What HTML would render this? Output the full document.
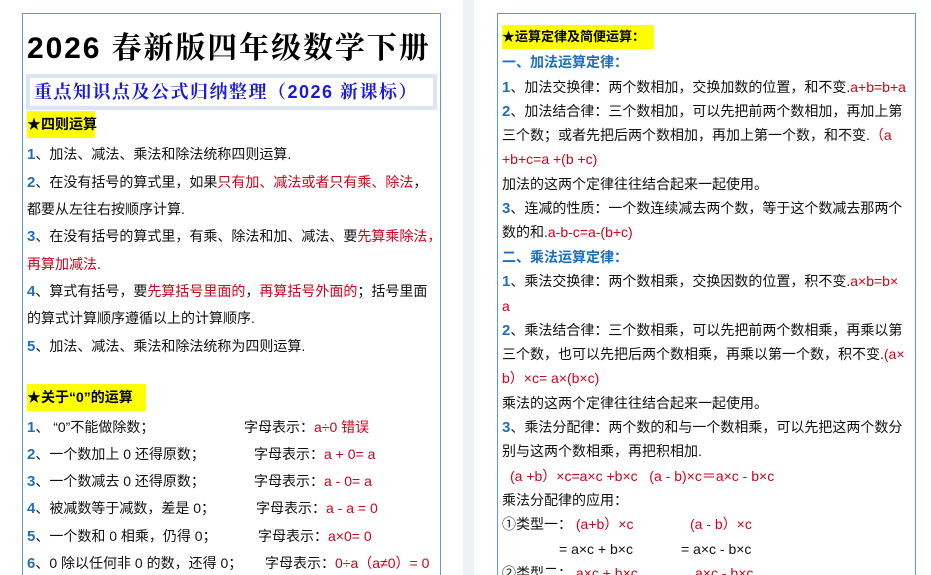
<!DOCTYPE html>
<html><head><meta charset="utf-8"><style>
*{margin:0;padding:0;box-sizing:border-box}
html,body{width:931px;height:575px;overflow:hidden}
body{background:#fff;position:relative;font-family:"Liberation Sans","Noto Sans CJK SC",sans-serif;color:#111}
.box{position:absolute;top:13px;border:1px solid #5b9bd5;border-bottom:none;height:562px}
.l{position:absolute;white-space:nowrap;font-size:14px;line-height:20px}
.n{color:#1f6fbf;font-weight:bold;font-size:15px}
.r{color:#d0021b}
.hl{background:#ffff00;font-weight:bold;color:#000}
.b{color:#1f6fbf;font-weight:bold}
</style></head><body>
<div style="position:absolute;left:463px;top:0;width:11px;height:575px;background:#eef0f4"></div>
<div class="box" style="left:22px;width:419px"></div>
<div class="box" style="left:497px;width:419px"></div>

<div class="l" style="left:27px;top:30px;font-size:30px;line-height:38px;font-weight:bold;letter-spacing:1.9px;color:#000;font-family:'Liberation Sans','Noto Serif CJK SC',serif">2026 春新版四年级数学下册</div>
<div style="position:absolute;left:26px;top:74px;width:411px;height:36px;background:#dde5f4;padding:4px"><div style="background:#fff;height:28px;color:#1a1adb;font-weight:bold;font-size:18px;line-height:28px;padding-left:4px;white-space:nowrap;letter-spacing:1.5px;font-family:'Liberation Sans','Noto Serif CJK SC',serif">重点知识点及公式归纳整理（2026 新课标）</div></div>
<div class="l hl" style="left:27px;top:111px;height:27px;line-height:27px;width:68px">★四则运算</div>
<div class="l" style="left:27px;top:144px"><span class="n">1</span>、加法、减法、乘法和除法统称四则运算.</div>
<div class="l" style="left:27px;top:172px"><span class="n">2</span>、在没有括号的算式里，如果<span class="r">只有加、减法或者只有乘、除法</span>，</div>
<div class="l" style="left:27px;top:199px">都要从左往右按顺序计算.</div>
<div class="l" style="left:27px;top:226px"><span class="n">3</span>、在没有括号的算式里，有乘、除法和加、减法、要<span class="r">先算乘除法，</span></div>
<div class="l" style="left:27px;top:254px"><span class="r">再算加减法</span>.</div>
<div class="l" style="left:27px;top:281px"><span class="n">4</span>、算式有括号，要<span class="r">先算括号里面的</span>，<span class="r">再算括号外面的</span>；括号里面</div>
<div class="l" style="left:27px;top:308px">的算式计算顺序遵循以上的计算顺序.</div>
<div class="l" style="left:27px;top:336px"><span class="n">5</span>、加法、减法、乘法和除法统称为四则运算.</div>
<div class="l hl" style="left:27px;top:384px;height:27px;line-height:27px;width:119px">★关于“0”的运算</div>
<div class="l" style="left:27px;top:417px"><span class="n">1</span>、 “0”不能做除数；</div><div class="l" style="left:244px;top:417px">字母表示：<span class="r">a÷0 错误</span></div>
<div class="l" style="left:27px;top:444px"><span class="n">2</span>、一个数加上 0 还得原数；</div><div class="l" style="left:254px;top:444px">字母表示：<span class="r">a + 0= a</span></div>
<div class="l" style="left:27px;top:471px"><span class="n">3</span>、一个数减去 0 还得原数；</div><div class="l" style="left:254px;top:471px">字母表示：<span class="r">a - 0= a</span></div>
<div class="l" style="left:27px;top:498px"><span class="n">4</span>、被减数等于减数，差是 0；</div><div class="l" style="left:256px;top:498px">字母表示：<span class="r">a - a = 0</span></div>
<div class="l" style="left:27px;top:526px"><span class="n">5</span>、一个数和 0 相乘，仍得 0；</div><div class="l" style="left:258px;top:526px">字母表示：<span class="r">a×0= 0</span></div>
<div class="l" style="left:27px;top:553px"><span class="n">6</span>、0 除以任何非 0 的数，还得 0；</div><div class="l" style="left:265px;top:553px">字母表示：<span class="r">0÷a（a≠0）= 0</span></div>

<div class="l hl" style="left:502px;top:25px;height:24px;line-height:24px;width:152px;font-size:13px">★运算定律及简便运算：</div>
<div class="l b" style="left:502px;top:52px">一、加法运算定律：</div>
<div class="l" style="left:502px;top:77px"><span class="n">1</span>、加法交换律：两个数相加，交换加数的位置，和不变.<span class="r">a+b=b+a</span></div>
<div class="l" style="left:502px;top:101px"><span class="n">2</span>、加法结合律：三个数相加，可以先把前两个数相加，再加上第</div>
<div class="l" style="left:502px;top:125px">三个数；或者先把后两个数相加，再加上第一个数，和不变.<span class="r">（a</span></div>
<div class="l" style="left:502px;top:149px"><span class="r">+b+c=a +(b +c)</span></div>
<div class="l" style="left:502px;top:174px">加法的这两个定律往往结合起来一起使用。</div>
<div class="l" style="left:502px;top:198px"><span class="n">3</span>、连减的性质：一个数连续减去两个数，等于这个数减去那两个</div>
<div class="l" style="left:502px;top:222px">数的和.<span class="r">a-b-c=a-(b+c)</span></div>
<div class="l b" style="left:502px;top:247px">二、乘法运算定律：</div>
<div class="l" style="left:502px;top:271px"><span class="n">1</span>、乘法交换律：两个数相乘，交换因数的位置，积不变.<span class="r">a×b=b×</span></div>
<div class="l" style="left:502px;top:296px"><span class="r">a</span></div>
<div class="l" style="left:502px;top:320px"><span class="n">2</span>、乘法结合律：三个数相乘，可以先把前两个数相乘，再乘以第</div>
<div class="l" style="left:502px;top:344px">三个数，也可以先把后两个数相乘，再乘以第一个数，积不变.<span class="r">(a×</span></div>
<div class="l" style="left:502px;top:368px"><span class="r">b）×c= a×(b×c)</span></div>
<div class="l" style="left:502px;top:393px">乘法的这两个定律往往结合起来一起使用。</div>
<div class="l" style="left:502px;top:417px"><span class="n">3</span>、乘法分配律：两个数的和与一个数相乘，可以先把这两个数分</div>
<div class="l" style="left:502px;top:441px">别与这两个数相乘，再把积相加.</div>
<div class="l r" style="left:510px;top:466px">(a +b）×c=a×c +b×c &nbsp;&nbsp;(a - b)×c＝a×c - b×c</div>
<div class="l" style="left:502px;top:490px">乘法分配律的应用：</div>
<div class="l" style="left:502px;top:514px">①类型一： <span class="r">(a+b）×c</span></div><div class="l r" style="left:690px;top:514px">(a - b）×c</div>
<div class="l" style="left:559px;top:539px">= a×c + b×c</div><div class="l" style="left:681px;top:539px">= a×c - b×c</div>
<div class="l" style="left:502px;top:563px">②类型二： <span class="r">a×c + b×c</span></div><div class="l r" style="left:695px;top:563px">a×c - b×c</div>
</body></html>
